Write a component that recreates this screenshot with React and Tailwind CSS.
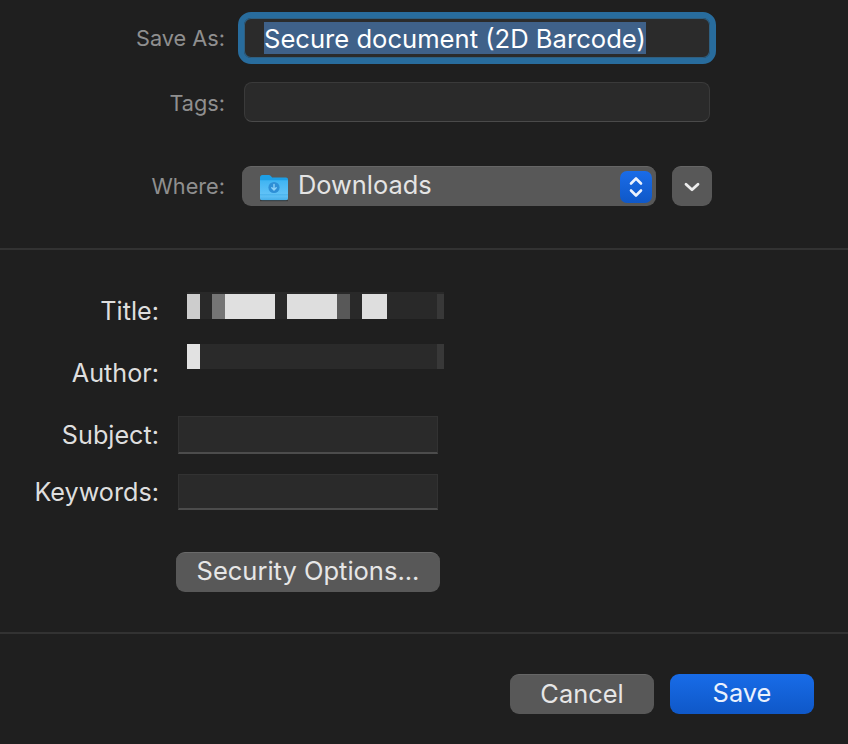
import React from 'react';

const FONT = "font-['Inter','Noto_Sans',sans-serif]";

function FolderIcon() {
  return (
    <svg width="30" height="30" viewBox="0 0 30 30" className="shrink-0">
      <defs>
        <linearGradient id="folderBody" x1="0" y1="0" x2="0" y2="1">
          <stop offset="0" stopColor="#3fb4f2" />
          <stop offset="0.75" stopColor="#63c3f7" />
          <stop offset="1" stopColor="#45aee9" />
        </linearGradient>
      </defs>
      <path d="M1 5.5C1 4 2 3 3.4 3h6.4c.9 0 1.4.4 2 1l1.4 1.4H27c1.2 0 2 .8 2 2V10H1z" fill="#1d9fe6" />
      <path d="M1 8.2h28v18c0 1.3-.8 2-2 2H3c-1.2 0-2-.7-2-2z" fill="url(#folderBody)" />
      <rect x="1" y="28" width="28" height="1.2" fill="#000" opacity="0.35" />
      <rect x="1" y="22.5" width="28" height="0.8" fill="#2f9fe0" opacity="0.7" />
      <circle cx="15" cy="15.5" r="5.6" fill="#2e8fd6" />
      <path d="M15 12.4v5.4M12.8 15.8l2.2 2.2 2.2-2.2" fill="none" stroke="#8fd2f8" strokeWidth="1.4" strokeLinecap="round" strokeLinejoin="round" />
    </svg>
  );
}

function TopLabel({ children, className = '' }) {
  return <div className={`w-[226px] shrink-0 text-right text-[21.7px] leading-none text-[#8f8f8f] pr-[1px] ${className}`}>{children}</div>;
}

function MetaLabel({ children, className = '' }) {
  return <div className={`w-[160px] shrink-0 text-right text-[25.2px] leading-none text-[#dedede] pr-[1px] ${className}`}>{children}</div>;
}

function PlainField() {
  return <div className="ml-[18px] w-[260px] bg-[#2a2a2a] border border-[#323232] border-b-2 border-b-[#4c4c4c] h-full" />;
}

export default function App() {
  return (
    <div className={`w-[848px] h-[744px] overflow-hidden bg-[#1f1f1f] flex flex-col ${FONT}`}>
      {/* Save panel */}
      <div className="h-[250px] shrink-0 border-b-2 border-[#323232] pt-[12px]">
        <div className="flex items-center h-[52px]">
          <TopLabel className="pt-[1px]">Save As:</TopLabel>
          <div className="ml-[12px] w-[478px] h-full rounded-[13px] border-[6px] border-[#286c9d] bg-[#2b2b2b] pl-[20px] flex items-center shadow-[inset_0_0_0_1px_#2f5f80]">
            <span className="bg-[#3f6189] h-[32px] leading-[33px] text-[25.6px] text-white whitespace-nowrap">Secure document (2D Barcode)</span>
          </div>
        </div>

        <div className="flex items-center h-[40px] mt-[18px]">
          <TopLabel className="pt-[4px]">Tags:</TopLabel>
          <div className="ml-[18px] w-[466px] h-full rounded-[8px] bg-[#2a2a2a] border border-[#3a3a3a] border-b-[#4a4a4a]" />
        </div>

        <div className="flex items-center h-[40px] mt-[44px]">
          <TopLabel className="pt-[2px]">Where:</TopLabel>
          <div className="ml-[16px] w-[414px] h-full rounded-[9px] bg-[#585858] border-t border-[#666666] flex items-center pl-[17px] pr-[4px]">
            <FolderIcon />
            <span className="ml-[9px] pb-[3px] text-[25.4px] leading-none text-[#e4e4e4]">Downloads</span>
            <div className="ml-auto w-[32px] h-[32px] rounded-[7px] bg-gradient-to-b from-[#1a6ce8] to-[#0f58c8] flex items-center justify-center">
              <svg width="20" height="26" viewBox="0 0 20 26" fill="none" stroke="#ecf2fd" strokeWidth="2.6" strokeLinecap="round" strokeLinejoin="round">
                <path d="M5 9.5 10 4.5l5 5" />
                <path d="M5 16.5l5 5 5-5" />
              </svg>
            </div>
          </div>
          <div className="ml-[16px] w-[40px] h-full rounded-[9px] bg-[#585858] border-t border-[#666666] flex items-center justify-center">
            <svg width="16" height="10" viewBox="0 0 16 10" fill="none" stroke="#ececec" strokeWidth="2.8" strokeLinecap="round" strokeLinejoin="round">
              <path d="M2 2.2 8 7.8l6-5.6" />
            </svg>
          </div>
        </div>
      </div>

      {/* Document metadata */}
      <div className="h-[384px] shrink-0 border-b-2 border-[#323232] pt-[42px]">
        <div className="flex items-start h-[27px]">
          <MetaLabel className="mt-[7px]">Title:</MetaLabel>
          <div className="ml-[27px] w-[257px] h-[27px] bg-[#292929] flex items-end">
            <div className="flex items-end h-[25px] w-full">
              <div className="w-[13px] h-full bg-[#cdcdcd]" />
              <div className="w-[12px]" />
              <div className="w-[13px] h-full bg-[#757575]" />
              <div className="w-[50px] h-full bg-[#e0e0e0]" />
              <div className="w-[12px]" />
              <div className="w-[50px] h-full bg-[#dedede]" />
              <div className="w-[13px] h-full bg-[#585858]" />
              <div className="w-[12px]" />
              <div className="w-[25px] h-full bg-[#dedede]" />
              <div className="ml-auto w-[7px] h-full bg-[#383838]" />
            </div>
          </div>
        </div>

        <div className="flex items-start h-[25px] mt-[25px]">
          <MetaLabel className="mt-[17px]">Author:</MetaLabel>
          <div className="ml-[27px] w-[257px] h-[25px] bg-[#2a2a2a] flex">
            <div className="w-[13px] h-full bg-[#e2e2e2]" />
            <div className="ml-auto w-[7px] h-full bg-[#383838]" />
          </div>
        </div>

        <div className="flex items-center h-[38px] mt-[47px]">
          <MetaLabel className="pt-[2px]">Subject:</MetaLabel>
          <PlainField />
        </div>

        <div className="flex items-center h-[36px] mt-[20px]">
          <MetaLabel className="pt-[2px]">Keywords:</MetaLabel>
          <PlainField />
        </div>

        <div className="ml-[176px] mt-[42px] w-[264px] h-[40px] rounded-[9px] bg-[#585858] border-t border-[#6a6a6a] flex items-center justify-center text-[25.5px] leading-none text-[#e6e6e6] pb-[4px]">
          Security Options...
        </div>
      </div>

      {/* Actions */}
      <div className="flex justify-end gap-[16px] pr-[34px] pt-[40px]">
        <div className="w-[144px] h-[40px] rounded-[9px] bg-[#585858] border-t border-[#666666] flex items-center justify-center text-[25.4px] leading-none text-[#e6e6e6] pb-[2px]">Cancel</div>
        <div className="w-[144px] h-[40px] rounded-[9px] bg-gradient-to-b from-[#186ce8] to-[#0f58c8] flex items-center justify-center text-[25.4px] leading-none text-[#eaf1fd] pb-[2px]">Save</div>
      </div>
    </div>
  );
}
